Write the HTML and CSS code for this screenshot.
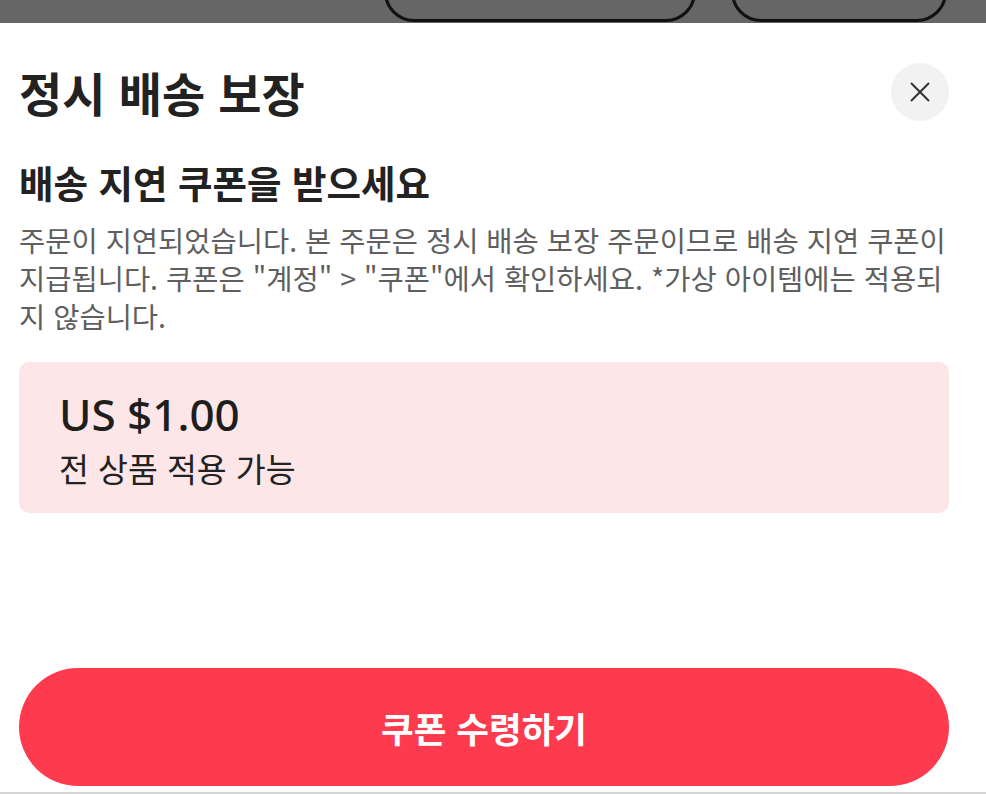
FILE: index.html
```html
<!DOCTYPE html>
<html lang="ko">
<head>
    <meta charset="UTF-8">
    <meta name="viewport" content="width=device-width, initial-scale=1.0">
    <title>정시 배송 보장</title>
    <link rel="stylesheet" href="styles.css">
</head>
<body>
    <!-- Dimmed page behind the sheet -->
    <div class="backdrop">
        <span class="chip chip-wide"></span>
        <span class="chip chip-small"></span>
    </div>

    <div class="sheet">
        <div class="sheet-head">
            <h1>정시 배송 보장</h1>
            <button class="close" aria-label="닫기">
                <svg width="24" height="24" viewBox="0 0 24 24">
                    <path d="M3 3 L21 21 M21 3 L3 21" stroke="#333" stroke-width="2" fill="none"/>
                </svg>
            </button>
        </div>

        <h2>배송 지연 쿠폰을 받으세요</h2>
        <p class="desc">주문이 지연되었습니다. 본 주문은 정시 배송 보장 주문이므로 배송 지연 쿠폰이<br>지급됩니다. 쿠폰은 "계정" &gt; "쿠폰"에서 확인하세요. *가상 아이템에는 적용되<br>지 않습니다.</p>

        <!-- Coupon section -->
        <div class="coupon">
            <div class="amount">US $1.00</div>
            <div class="scope">전 상품 적용 가능</div>
        </div>

        <button class="claim">쿠폰 수령하기</button>
    </div>
</body>
</html>
```

FILE: styles.css
```css
body {
    margin: 0;
    height: 794px;
    display: flex;
    flex-direction: column;
    font-family: "Noto Sans CJK KR", "Noto Sans", sans-serif;
    color: #222;
    background: #fff;
    overflow: hidden;
}

.backdrop {
    height: 23px;
    background-color: #666;
    display: flex;
    align-items: flex-end;
    overflow: hidden;
}

.chip {
    display: block;
    height: 60px;
    flex-shrink: 0;
    box-sizing: border-box;
    border: 3px solid #111;
    border-radius: 40px;
    margin-bottom: 1px;
}

.chip-wide {
    width: 312px;
    margin-left: 384px;
}

.chip-small {
    width: 216px;
    margin-left: 35px;
}

.sheet {
    flex: 1;
    display: flex;
    flex-direction: column;
    padding: 0 37px 6px 19px;
    border-bottom: 2px solid #d4d4d4;
}

.sheet-head {
    display: flex;
    justify-content: space-between;
    align-items: center;
    padding-top: 40px;
}

h1 {
    margin: 0;
    font-size: 47px;
    font-weight: 700;
    line-height: 58px;
    color: #222;
}

.close {
    width: 58px;
    height: 58px;
    border: none;
    border-radius: 50%;
    background-color: #f2f2f2;
    display: flex;
    justify-content: center;
    align-items: center;
    padding: 0;
}

h2 {
    margin: 39px 0 0;
    font-size: 37.5px;
    font-weight: 700;
    line-height: 44px;
    color: #222;
}

.desc {
    margin: 17px 0 0;
    font-size: 28.5px;
    line-height: 38px;
    color: #5f5f5f;
    white-space: nowrap;
}

.coupon {
    margin-top: 27px;
    background-color: #fde6e7;
    border-radius: 10px;
    padding: 22px 40px 22px 40px;
}

.amount {
    font-family: "Noto Sans", sans-serif;
    font-size: 44px;
    font-weight: 500;
    line-height: 60px;
    color: #1e1e1e;
}

.scope {
    font-size: 32.5px;
    line-height: 47px;
    color: #222;
}

.claim {
    margin-top: auto;
    height: 118px;
    border: none;
    border-radius: 59px;
    background-color: #fe3a4f;
    color: #fff;
    font-family: "Noto Sans CJK KR", sans-serif;
    font-size: 35.5px;
    font-weight: 700;
}
```
